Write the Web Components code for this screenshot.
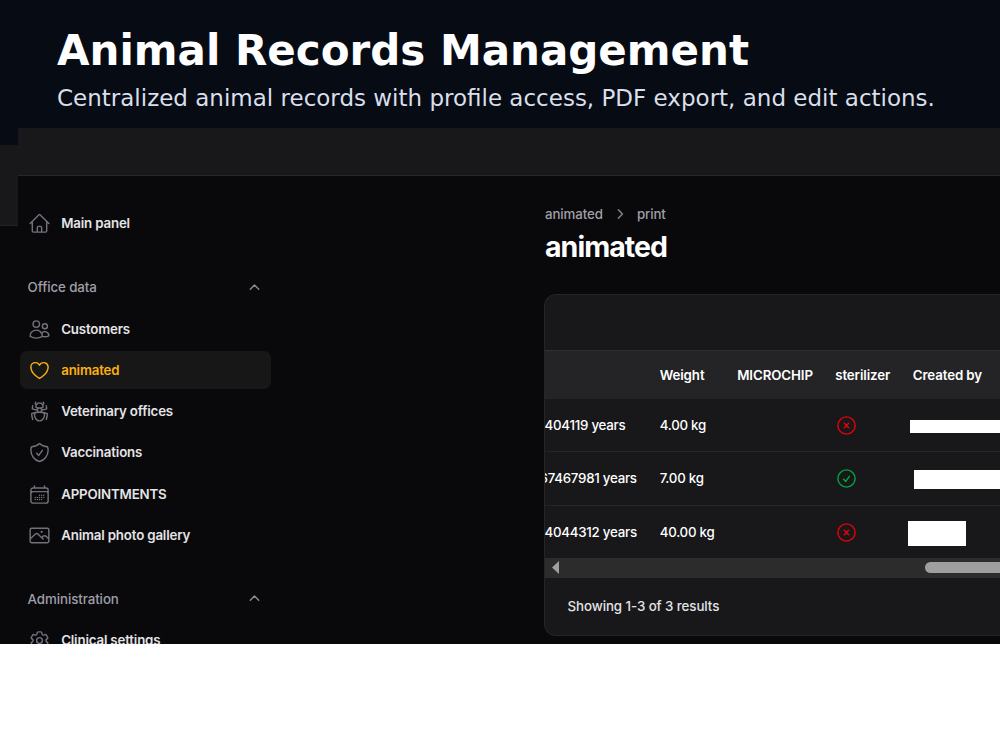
<!DOCTYPE html>
<html lang="en">
<head>
<meta charset="utf-8">
<title>Animal Records Management</title>
<style>
  body {
    background: #fff;
    font-family: Inter, sans-serif;
    margin: 0;
    overflow: hidden;
  }
</style>
</head>
<body>
<records-page></records-page>

<script>
const icons = {
  home: 'm2.25 12 8.954-8.955c.44-.439 1.152-.439 1.591 0L21.75 12M4.5 9.75v10.125c0 .621.504 1.125 1.125 1.125H9.75v-4.875c0-.621.504-1.125 1.125-1.125h2.25c.621 0 1.125.504 1.125 1.125V21h4.125c.621 0 1.125-.504 1.125-1.125V9.75M8.25 21h8.25',
  users: 'M15 19.128a9.38 9.38 0 0 0 2.625.372 9.337 9.337 0 0 0 4.121-.952 4.125 4.125 0 0 0-7.533-2.493M15 19.128v-.003c0-1.113-.285-2.16-.786-3.07M15 19.128v.106A12.318 12.318 0 0 1 8.624 21c-2.331 0-4.512-.645-6.374-1.766l-.001-.109a6.375 6.375 0 0 1 11.964-3.07M12 6.375a3.375 3.375 0 1 1-6.75 0 3.375 3.375 0 0 1 6.75 0Zm8.25 2.25a2.625 2.625 0 1 1-5.25 0 2.625 2.625 0 0 1 5.25 0Z',
  heart: 'M21 8.25c0-2.485-2.099-4.5-4.688-4.5-1.935 0-3.597 1.126-4.312 2.733-.715-1.607-2.377-2.733-4.313-2.733C5.1 3.75 3 5.765 3 8.25c0 7.22 9 12 9 12s9-4.78 9-12Z',
  bug: 'M12 12.75c1.148 0 2.278.08 3.383.237 1.037.146 1.866.966 1.866 2.013 0 3.728-2.35 6.75-5.25 6.75S6.75 18.728 6.75 15c0-1.046.83-1.867 1.866-2.013A24.204 24.204 0 0 1 12 12.75Zm0 0c2.883 0 5.647.508 8.207 1.44a23.91 23.91 0 0 1-1.152 6.06M12 12.75c-2.883 0-5.647.508-8.208 1.44.125 2.104.52 4.136 1.153 6.06M12 12.75a2.25 2.25 0 0 0 2.248-2.354M12 12.75a2.25 2.25 0 0 1-2.248-2.354M12 8.25c.995 0 1.971-.08 2.922-.236.403-.066.74-.358.795-.762a3.778 3.778 0 0 0-.399-2.25M12 8.25c-.995 0-1.97-.08-2.922-.236-.402-.066-.74-.358-.795-.762a3.734 3.734 0 0 1 .4-2.253M12 8.25a2.25 2.25 0 0 0-2.248 2.146M12 8.25a2.25 2.25 0 0 1 2.248 2.146M8.683 5a6.032 6.032 0 0 1-1.155-1.002c.07-.63.27-1.222.574-1.747m.581 2.749A3.75 3.75 0 0 1 15.318 5m0 0c.427-.283.815-.62 1.155-.999a4.471 4.471 0 0 0-.575-1.752M4.921 6a24.048 24.048 0 0 0-.392 3.314c1.668.546 3.416.914 5.223 1.082M19.08 6c.205 1.08.337 2.187.392 3.314a23.882 23.882 0 0 1-5.223 1.082',
  shield: 'M9 12.75 11.25 15 15 9.75m-3-7.036A11.959 11.959 0 0 1 3.598 6 11.99 11.99 0 0 0 3 9.749c0 5.592 3.824 10.29 9 11.623 5.176-1.332 9-6.03 9-11.622 0-1.31-.21-2.571-.598-3.751h-.152c-3.196 0-6.1-1.248-8.25-3.285Z',
  calendar: 'M6.75 3v2.25M17.25 3v2.25M3 18.75V7.5a2.25 2.25 0 0 1 2.25-2.25h13.5A2.25 2.25 0 0 1 21 7.5v11.25m-18 0A2.25 2.25 0 0 0 5.25 21h13.5A2.25 2.25 0 0 0 21 18.75m-18 0v-7.5A2.25 2.25 0 0 1 5.25 9h13.5A2.25 2.25 0 0 1 21 11.25v7.5m-9-6h.008v.008H12v-.008ZM12 15h.008v.008H12V15Zm0 2.25h.008v.008H12v-.008ZM9.75 15h.008v.008H9.75V15Zm0 2.25h.008v.008H9.75v-.008ZM7.5 15h.008v.008H7.5V15Zm0 2.25h.008v.008H7.5v-.008Zm6.75-4.5h.008v.008h-.008v-.008Zm0 2.25h.008v.008h-.008V15Zm0 2.25h.008v.008h-.008v-.008Zm2.25-4.5h.008v.008H16.5v-.008Zm0 2.25h.008v.008H16.5V15Z',
  photo: 'm2.25 15.75 5.159-5.159a2.25 2.25 0 0 1 3.182 0l5.159 5.159m-1.5-1.5 1.409-1.409a2.25 2.25 0 0 1 3.182 0l2.909 2.909m-18 3.75h16.5a1.5 1.5 0 0 0 1.5-1.5V6a1.5 1.5 0 0 0-1.5-1.5H3.75A1.5 1.5 0 0 0 2.25 6v12a1.5 1.5 0 0 0 1.5 1.5Zm10.5-11.25h.008v.008h-.008V8.25Zm.375 0a.375.375 0 1 1-.75 0 .375.375 0 0 1 .75 0Z',
  cog: 'M9.594 3.94c.09-.542.56-.94 1.11-.94h2.593c.55 0 1.02.398 1.11.94l.213 1.281c.063.374.313.686.645.87.074.04.147.083.22.127.325.196.72.257 1.075.124l1.217-.456a1.125 1.125 0 0 1 1.37.49l1.296 2.247a1.125 1.125 0 0 1-.26 1.431l-1.003.827c-.293.241-.438.613-.43.992a7.723 7.723 0 0 1 0 .255c-.008.378.137.75.43.991l1.004.827c.424.35.534.955.26 1.43l-1.298 2.247a1.125 1.125 0 0 1-1.369.491l-1.217-.456c-.355-.133-.75-.072-1.076.124a6.47 6.47 0 0 1-.22.128c-.331.183-.581.495-.644.869l-.213 1.281c-.09.543-.56.94-1.11.94h-2.594c-.55 0-1.019-.398-1.11-.94l-.213-1.281c-.062-.374-.312-.686-.644-.87a6.52 6.52 0 0 1-.22-.127c-.325-.196-.72-.257-1.076-.124l-1.217.456a1.125 1.125 0 0 1-1.369-.49l-1.297-2.247a1.125 1.125 0 0 1 .26-1.431l1.004-.827c.292-.24.437-.613.43-.991a6.932 6.932 0 0 1 0-.255c.007-.38-.138-.751-.43-.992l-1.004-.827a1.125 1.125 0 0 1-.26-1.43l1.297-2.247a1.125 1.125 0 0 1 1.37-.491l1.216.456c.356.133.751.072 1.076-.124.072-.044.146-.086.22-.128.332-.183.582-.495.644-.869l.214-1.28ZM15 12a3 3 0 1 1-6 0 3 3 0 0 1 6 0Z',
  no: 'm9.75 9.75 4.5 4.5m0-4.5-4.5 4.5M21 12a9 9 0 1 1-18 0 9 9 0 0 1 18 0Z',
  yes: 'M9 12.75 11.25 15 15 9.75M21 12a9 9 0 1 1-18 0 9 9 0 0 1 18 0Z',
  up: 'm7.6 13.8 4.4-4.4 4.4 4.4',
  right: 'm10.1 7.4 4.6 4.6-4.6 4.6'
}

function define (name, render) {
  window.customElements.define(name, class extends HTMLElement {
    constructor () {
      super()
      this.attachShadow({mode: 'open'})
    }

    connectedCallback () {
      const template = document.createElement('template')
      template.innerHTML = render(this)
      this.shadowRoot.replaceChildren(template.content.cloneNode(true))
    }
  })
}

define('ui-icon', el => `
  <style>
    :host {
      display: block;
      flex: none;
      height: 23px;
      width: 23px;
    }
    svg { display: block; height: 100%; width: 100%; }
  </style>
  <svg viewBox="0 0 24 24" fill="none" stroke="currentColor" stroke-width="1.5"
    stroke-linecap="round" stroke-linejoin="round"><path d="${icons[el.getAttribute('name')]}"/></svg>
`)

define('page-banner', () => `
  <style>
    :host {
      background: #060b14;
      box-sizing: border-box;
      display: block;
      font-family: "DejaVu Sans", sans-serif;
      height: 128px;
      padding: 26px 0 0 57px;
      white-space: nowrap;
    }
    h1 {
      color: #fff;
      font-size: 42px;
      line-height: 50px;
      margin: 0;
    }
    p {
      color: #d9dfeb;
      font-size: 23px;
      line-height: 28px;
      margin: 8px 0 0;
    }
  </style>
  <h1><slot name="title"></slot></h1>
  <p><slot></slot></p>
`)

define('nav-item', el => `
  <style>
    :host {
      align-items: center;
      border-radius: 7px;
      box-sizing: border-box;
      color: #e4e4e7;
      display: flex;
      flex: none;
      font-size: 13.3px;
      font-weight: 600;
      gap: 10.3px;
      height: 38px;
      letter-spacing: -0.17px;
      line-height: 20px;
      padding: 0 7.9px;
      white-space: nowrap;
    }
    :host([active]) {
      background: #171717;
      color: #fbb010;
    }
    ui-icon { color: #71717b; position: relative; top: 0.5px; }
    :host([active]) ui-icon { color: #fbb010; }
  </style>
  <ui-icon name="${el.getAttribute('icon')}"></ui-icon>
  <span><slot></slot></span>
`)

define('nav-group', el => `
  <style>
    :host {
      display: flex;
      flex: none;
      flex-direction: column;
      gap: 3.25px;
    }
    header {
      align-items: center;
      color: #9f9fa9;
      display: flex;
      font-size: 13.3px;
      font-weight: 500;
      height: 38px;
      justify-content: space-between;
      letter-spacing: -0.08px;
      padding: 0 5px 0 7.6px;
    }
    ui-icon { color: #8a8a94; }
  </style>
  <header><span>${el.getAttribute('label')}</span><ui-icon name="up"></ui-icon></header>
  <slot></slot>
`)

define('side-nav', () => `
  <style>
    :host {
      box-sizing: border-box;
      display: flex;
      flex: none;
      flex-direction: column;
      gap: 26px;
      padding: 28.3px 0 0 2px;
      width: 253px;
    }
  </style>
  <nav-item icon="home">Main panel</nav-item>
  <nav-group label="Office data">
    <nav-item icon="users">Customers</nav-item>
    <nav-item icon="heart" active>animated</nav-item>
    <nav-item icon="bug">Veterinary offices</nav-item>
    <nav-item icon="shield">Vaccinations</nav-item>
    <nav-item icon="calendar">APPOINTMENTS</nav-item>
    <nav-item icon="photo">Animal photo gallery</nav-item>
  </nav-group>
  <nav-group label="Administration">
    <nav-item icon="cog">Clinical settings</nav-item>
  </nav-group>
`)

define('page-heading', () => `
  <style>
    :host { display: block; height: 118px; }
    nav {
      align-items: center;
      color: #9f9fa9;
      display: flex;
      font-size: 13.3px;
      font-weight: 500;
      gap: 6px;
      letter-spacing: -0.1px;
      line-height: 20px;
      padding: 28px 0 0 1px;
    }
    ui-icon { color: #85858f; height: 22px; margin: -1px 0; width: 22px; }
    h1 {
      color: #fff;
      font-size: 28.5px;
      font-weight: 700;
      letter-spacing: -0.95px;
      line-height: 34px;
      margin: 6px 0 0 1px;
    }
  </style>
  <nav><span>animated</span><ui-icon name="right"></ui-icon><span>print</span></nav>
  <h1>animated</h1>
`)

// Row of the records table. The owner column is blanked out.
define('record-row', el => `
  <style>
    :host {
      align-items: center;
      border-bottom: 1px solid #262629;
      box-sizing: border-box;
      color: #fff;
      display: grid;
      flex: none;
      font-size: 13.3px;
      font-weight: 500;
      grid-template-columns: 114.7px 77px 98px 71.3px 1fr;
      height: 53px;
      letter-spacing: -0.25px;
      line-height: 20px;
      white-space: nowrap;
    }
    :host([last]) { border-bottom: 0; height: 52px; }
    .age { overflow: hidden; }
    .age span { margin-left: var(--shift, -0.5px); }
    .age, .weight { padding-bottom: var(--lift, 0px); }
    .no { color: #e7000b; }
    .yes { color: #00a63e; }
    .owner { background: #fff; justify-self: start; }
  </style>
  <div class="age"><span><slot></slot></span></div>
  <div class="weight">${el.getAttribute('weight')}</div>
  <div></div>
  <ui-icon class="${el.getAttribute('state')}" name="${el.getAttribute('state')}"></ui-icon>
  <div class="owner" style="${el.getAttribute('owner')}"></div>
`)

define('record-table', () => `
  <style>
    :host {
      background: #18181a;
      border: 1px solid #252528;
      border-radius: 12px 0 0 12px;
      border-right: 0;
      box-sizing: border-box;
      display: flex;
      flex-direction: column;
      height: 342px;
      overflow: hidden;
    }
    .tools { flex: none; height: 55px; }
    .head {
      align-items: center;
      background: #242426;
      border-top: 1px solid #303033;
      box-sizing: border-box;
      color: #fff;
      display: grid;
      flex: none;
      font-size: 13.3px;
      font-weight: 600;
      grid-template-columns: 114.7px 77.5px 98px 77.5px 1fr;
      height: 49px;
      letter-spacing: -0.1px;
      white-space: nowrap;
    }
    .scroll {
      align-items: center;
      background: #2c2c2c;
      display: flex;
      flex: none;
      height: 20px;
      justify-content: space-between;
      padding-left: 7px;
    }
    .scroll svg { display: block; height: 13px; margin-bottom: 1px; width: 7px; }
    .thumb {
      background: #9f9f9f;
      border-radius: 6px 0 0 6px;
      height: 11px;
      margin-bottom: 1px;
      width: 75px;
    }
    footer {
      color: #e4e4e7;
      font-size: 13.3px;
      font-weight: 500;
      letter-spacing: -0.07px;
      line-height: 20px;
      padding: 18px 0 0 22.5px;
    }
  </style>
  <div class="tools"></div>
  <div class="head"><span></span><span>Weight</span><span>MICROCHIP</span><span>sterilizer</span><span>Created by</span></div>
  <record-row weight="4.00 kg" state="no" owner="height: 13px; width: 90px; margin: 3px 0 0 4px">404119 years</record-row>
  <record-row weight="7.00 kg" state="yes" owner="height: 19px; width: 86px; margin: 2px 0 0 8px" style="--shift: -5.5px; --lift: 1px; height: 54px">67467981 years</record-row>
  <record-row weight="40.00 kg" state="no" owner="height: 25px; width: 58px; margin: 3px 0 0 2px" last>4044312 years</record-row>
  <div class="scroll">
    <svg viewBox="0 0 7 13"><path d="M7 0v13L0 6.5Z" fill="#9f9f9f"/></svg>
    <div class="thumb"></div>
  </div>
  <footer>Showing 1-3 of 3 results</footer>
`)

define('app-window', () => `
  <style>
    :host {
      background: #09090b;
      display: flex;
      flex: 1;
      flex-direction: column;
      min-width: 0;
      overflow: hidden;
    }
    .topbar {
      background: #18181a;
      border-bottom: 1px solid #27272a;
      box-sizing: border-box;
      flex: none;
      height: 48px;
    }
    .body {
      display: flex;
      flex: 1;
      justify-content: space-between;
      min-height: 0;
    }
    main { width: 456px; }
  </style>
  <div class="topbar"></div>
  <div class="body">
    <side-nav></side-nav>
    <main>
      <page-heading></page-heading>
      <record-table></record-table>
    </main>
  </div>
`)

define('records-page', () => `
  <style>
    :host {
      display: flex;
      flex-direction: column;
      height: 644px;
      overflow: hidden;
      width: 1000px;
    }
    .row { display: flex; flex: 1; min-height: 0; }
    .edge {
      background: #09090b;
      display: flex;
      flex: none;
      flex-direction: column;
      width: 18px;
    }
    .edge div:first-child { background: #060b14; height: 17px; }
    .edge div:last-child {
      background: #18181b;
      border-bottom: 1px solid #232326;
      height: 80px;
    }
  </style>
  <page-banner>
    <span slot="title">Animal Records Management</span>
    Centralized animal records with profile access, PDF export, and edit actions.
  </page-banner>
  <div class="row">
    <div class="edge"><div></div><div></div></div>
    <app-window></app-window>
  </div>
`)
</script>
</body>
</html>
